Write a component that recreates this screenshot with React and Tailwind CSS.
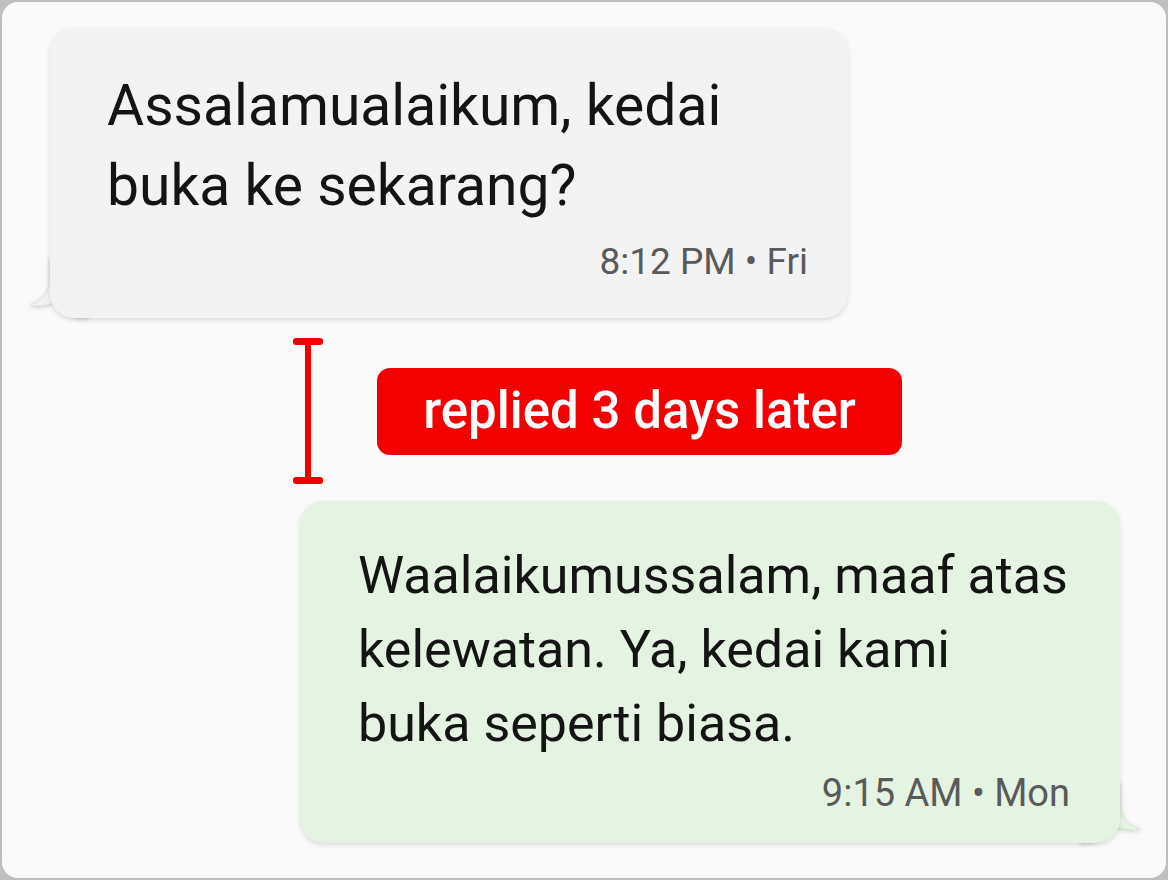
import React from 'react';

const font = { fontFamily: 'Roboto, "Noto Sans", sans-serif' };

const IBeam = () => (
  <svg width="32" height="148" viewBox="0 0 32 148" className="shrink-0">
    <g fill="#f20000">
      <rect x="1" y="1" width="30" height="7" rx="3" />
      <rect x="13" y="4" width="6" height="140" />
      <rect x="1" y="140" width="30" height="7" rx="3" />
    </g>
  </svg>
);

export default function App() {
  return (
    <div className="w-[1168px] h-[880px] bg-[#bfbfbf] p-[2px]" style={font}>
      <div className="h-full rounded-[16px] bg-[#fafafa] flex flex-col pt-[26px]">
        {/* incoming bubble */}
        <div className="relative ml-[48px] w-[798px] h-[290px]">
          <svg className="absolute left-[-22px] top-[230px] drop-shadow-[0_1px_2px_rgba(0,0,0,0.2)]" width="60" height="62" viewBox="0 0 60 62">
            <path d="M22 0 L22 20 C22 35 16 42 2 47 C14 49 22 46 28 43 C34 52 42 60 60 60 L60 0 Z" fill="#f3f3f3" stroke="#e8e8e8" strokeWidth="1" />
          </svg>
          <div className="relative h-full rounded-[24px] bg-[#f3f3f3] shadow-[0_2px_5px_rgba(0,0,0,0.12)] pl-[57px] pr-[40px] pt-[38px] flex flex-col">
            <p className="text-[57px] leading-[80px] text-[#141414] whitespace-nowrap">
              Assalamualaikum, kedai<br />buka ke sekarang?
            </p>
            <p className="mt-[16px] self-end text-[37px] leading-[40px] text-[#5a5a5a] whitespace-nowrap">8:12 PM • Fri</p>
          </div>
        </div>

        {/* gap marker */}
        <div className="flex items-center mt-[19px] ml-[290px] gap-[53px]">
          <IBeam />
          <div className="h-[87px] w-[525px] rounded-[13px] bg-[#f40000] flex items-center justify-center text-white text-[51px] font-medium whitespace-nowrap">
            replied 3 days later
          </div>
        </div>

        {/* outgoing bubble */}
        <div className="relative ml-[298px] mt-[16px] w-[820px] h-[342px]">
          <svg className="absolute left-[780px] top-[282px] drop-shadow-[0_1px_2px_rgba(0,0,0,0.2)]" width="62" height="62" viewBox="0 0 62 62">
            <path d="M0 0 L40 0 L40 20 C40 34 46 42 60 46 C50 48 42 46 34 43 C28 52 20 60 0 60 Z" fill="#e5f3e2" stroke="#d6ebd3" strokeWidth="1" />
          </svg>
          <div className="relative h-full rounded-[24px] bg-[#e5f3e2] shadow-[0_2px_5px_rgba(0,0,0,0.12)] pl-[58px] pr-[50px] pt-[38px] flex flex-col">
            <p className="text-[52px] leading-[74px] text-[#141414] whitespace-nowrap">
              Waalaikumussalam, maaf atas<br />kelewatan. Ya, kedai kami<br />buka seperti biasa.
            </p>
            <p className="mt-[12px] self-end text-[38px] leading-[40px] text-[#5a5a5a] whitespace-nowrap">9:15 AM • Mon</p>
          </div>
        </div>
      </div>
    </div>
  );
}
